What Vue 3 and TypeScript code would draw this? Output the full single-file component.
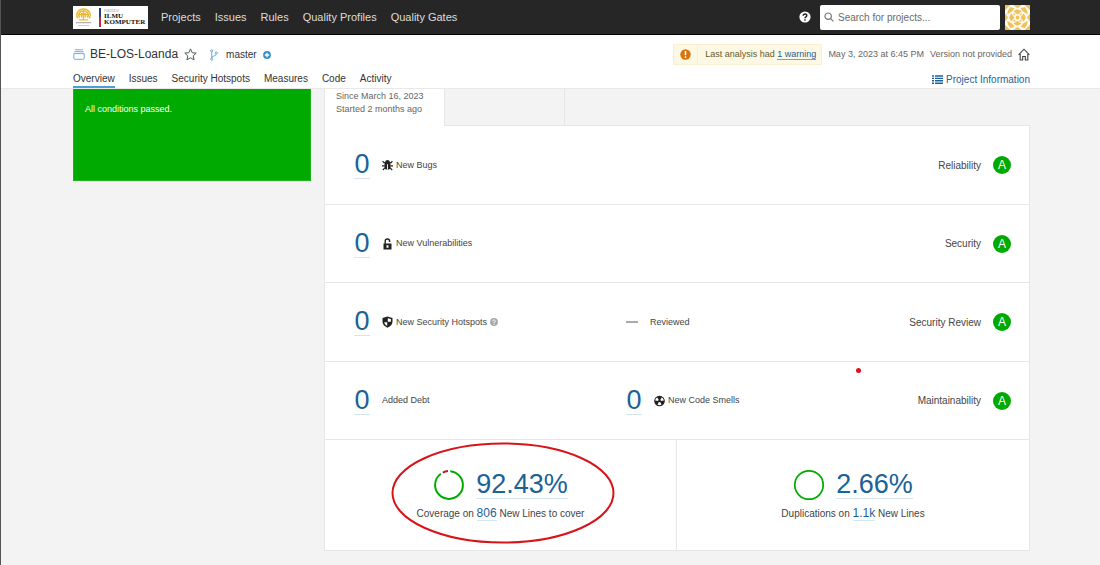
<script setup lang="ts">
interface Metric {
  value: string
  label: string
  icon?: 'bug' | 'lock' | 'shield' | 'smell'
  help?: boolean
}

interface MeasureRow {
  first: Metric
  second?: Metric
  domain: string
  rating: string
}

const navItems: string[] = ['Projects', 'Issues', 'Rules', 'Quality Profiles', 'Quality Gates']
const projectTabs: string[] = ['Overview', 'Issues', 'Security Hotspots', 'Measures', 'Code', 'Activity']

const rows: MeasureRow[] = [
  { first: { value: '0', label: 'New Bugs', icon: 'bug' }, domain: 'Reliability', rating: 'A' },
  { first: { value: '0', label: 'New Vulnerabilities', icon: 'lock' }, domain: 'Security', rating: 'A' },
  {
    first: { value: '0', label: 'New Security Hotspots', icon: 'shield', help: true },
    second: { value: '', label: 'Reviewed' },
    domain: 'Security Review',
    rating: 'A',
  },
  {
    first: { value: '0', label: 'Added Debt' },
    second: { value: '0', label: 'New Code Smells', icon: 'smell' },
    domain: 'Maintainability',
    rating: 'A',
  },
]

const metrics = (row: MeasureRow): Metric[] => (row.second ? [row.first, row.second] : [row.first])
</script>

<template>
  <div class="page">
    <header class="topbar">
      <a class="logo" href="#" aria-label="Fakultas Ilmu Komputer">
        <svg class="crest" viewBox="0 0 20 20" aria-hidden="true">
          <g fill="none" stroke="#edb92e" stroke-width="1.5">
            <path d="M4 11C1 6 5 1 10 1s9 5 6 10" />
            <path d="M6 10C3 6 7 3 10 3s7 3 4 7M8 10V6h4v4M10 2v11M5 7h10M5 12.500h10" />
          </g>
          <path d="M2 15.500h16" stroke="#999" stroke-width="1" />
          <path d="M4 18.500h12" stroke="#c8c8c8" stroke-width="1" />
        </svg>
        <span class="logo-bar"></span>
        <span class="logo-text">
          <span class="logo-small">FAKULTAS</span>
          <span>ILMU</span>
          <span>KOMPUTER</span>
        </span>
      </a>
      <nav class="nav" aria-label="Main">
        <a v-for="item in navItems" :key="item" href="#">{{ item }}</a>
      </nav>
      <button class="icon-button help" type="button" aria-label="Help">
        <svg width="12" height="12" viewBox="0 0 12 12">
          <circle cx="6" cy="6" r="5.6" fill="#fff" />
          <path d="M4.2 4.7C4.2 2.4 7.9 2.4 7.8 4.6 7.8 5.8 6 5.8 6 7.2M6 8.2v1.5" fill="none" stroke="#262626" stroke-width="1.5" />
        </svg>
      </button>
      <label class="search">
        <svg width="10" height="10" viewBox="0 0 10 10" aria-hidden="true">
          <circle cx="4.2" cy="4.2" r="3.2" fill="none" stroke="#777" stroke-width="1.2" />
          <path d="M6.6 6.6 9.4 9.4" stroke="#777" stroke-width="1.3" />
        </svg>
        <input type="search" placeholder="Search for projects..." aria-label="Search for projects" />
      </label>
      <button class="icon-button" type="button" aria-label="Account">
        <svg width="25" height="25" viewBox="0 0 24 24">
          <rect width="24" height="24" fill="#fffaf0" />
          <g fill="#eec25a">
            <path d="M0 0h5L0 5zM24 0v5l-5-5zM0 24v-5l5 5zM24 24h-5l5-5z" />
            <path d="M8 0h8l-4 3zM8 24h8l-4-3zM0 8v8l3-4zM24 8v8l-3-4z" />
            <path d="M5 2l4 1-2 3-5 3 1-4zM19 2l-4 1 2 3 5 3-1-4zM5 22l4-1-2-3-5-3 1 4zM19 22l-4-1 2-3 5-3-1 4z" />
            <path d="M12 4l4 2-4 3-4-3zM12 20l4-2-4-3-4 3zM4 12l2-4 3 4-3 4zM20 12l-2-4-3 4 3 4z" />
            <path d="M8 8l2.500.5-2 2zM16 8l-2.500.5 2 2zM8 16l2.500-.5-2-2zM16 16l-2.500-.5 2-2z" />
            <circle cx="12" cy="12" r="1.800" />
          </g>
        </svg>
      </button>
    </header>

    <section class="project">
      <div class="project-line">
        <svg class="project-icon" width="12" height="11" viewBox="0 0 12 11" aria-hidden="true">
          <path d="M2.2.8h7.6M1.4 2.7h9.2M.8 4.6h10.4V9c0 .8-.5 1.3-1.3 1.3H2.1C1.300 10.300.8 9.800.8 9z" fill="none" stroke="#69addd" />
        </svg>
        <a class="project-name" href="#">BE-LOS-Loanda</a>
        <button class="icon-button star" type="button" aria-label="Add to favorites">
          <svg width="13" height="13" viewBox="0 0 13 13">
            <path d="M6.500.9 8.200 4.700l4 .4-3 2.800.9 4-3.600-2.100-3.600 2.100.9-4-3-2.800 4-.4z" fill="none" stroke="#555" stroke-linejoin="round" />
          </svg>
        </button>
        <svg class="branch-icon" width="8" height="12" viewBox="0 0 8 12" aria-hidden="true">
          <g fill="none" stroke="#69addd">
            <circle cx="1.700" cy="1.800" r="1.100" />
            <circle cx="1.700" cy="10.200" r="1.100" />
            <circle cx="6.300" cy="4" r="1.100" />
            <path d="M1.700 3v6M6.300 5.100C6.300 7.500 1.700 6.500 1.700 9" />
          </g>
        </svg>
        <span class="branch">master</span>
        <button class="icon-button" type="button" aria-label="Branch information">
          <svg width="8" height="8" viewBox="0 0 8 8">
            <circle cx="4" cy="4" r="3.900" fill="#358fcd" />
            <path d="M4 1.800v4.400M1.800 4h4.400" stroke="#fff" stroke-width="1.300" />
          </svg>
        </button>
        <div class="meta">
          <div class="alert" role="status">
            <span class="alert-icon">
              <svg width="11" height="11" viewBox="0 0 11 11" aria-hidden="true">
                <circle cx="5.500" cy="5.500" r="5.200" fill="#d9730d" />
                <path d="M5.500 2v4.200M5.500 7.300v1.600" stroke="#fff" stroke-width="1.500" />
              </svg>
            </span>
            <span class="alert-text">Last analysis had <a href="#">1 warning</a></span>
          </div>
          <span>May 3, 2023 at 6:45 PM</span>
          <span>Version not provided</span>
          <button class="icon-button" type="button" aria-label="Set as homepage">
            <svg width="12" height="13" viewBox="0 0 12 13">
              <path d="M.6 6.800 6 1.200l5.400 5.600M2.200 6v6h2.500V8.500h2.600V12h2.500V6" fill="none" stroke="#444" stroke-width="1.100" />
            </svg>
          </button>
        </div>
      </div>
      <nav class="tabs" aria-label="Project">
        <a v-for="(tab, i) in projectTabs" :key="tab" href="#" :class="{ active: i === 0 }">{{ tab }}</a>
        <a class="information" href="#">
          <svg width="11" height="9" viewBox="0 0 11 9" aria-hidden="true">
            <path d="M0 1h2M3 1h8M0 3.400h2M3 3.400h8M0 5.800h2M3 5.800h8M0 8.200h2M3 8.200h8" stroke="#1b6297" stroke-width="1.400" />
          </svg>
          Project Information
        </a>
      </nav>
    </section>

    <main class="content">
      <aside class="gate">All conditions passed.</aside>
      <div class="overview">
        <div class="periods">
          <button class="period selected" type="button">Since March 16, 2023<br />Started 2 months ago</button>
          <button class="period" type="button" aria-label="Overall Code"></button>
        </div>
        <div class="panel">
          <div v-for="row in rows" :key="row.domain" class="row">
            <div v-for="metric in metrics(row)" :key="metric.label" class="metric">
              <a v-if="metric.value" class="value" href="#">{{ metric.value }}</a>
              <span v-else class="dash"></span>
              <span class="label">
                <svg v-if="metric.icon === 'bug'" width="11" height="12" viewBox="0 0 11 12" aria-hidden="true">
                  <path d="M3.200 3.200C3.200.4 7.800.4 7.800 3.200z" fill="#222" />
                  <path d="M1.800 3.500h7.400M.6 2.200 2.300 4M10.400 2.200 8.700 4M0 6.800h2.700M11 6.800H8.300M.8 11.200l2-2.400M10.200 11.200l-2-2.400" stroke="#222" stroke-width="1.200" />
                  <path d="M2.500 4h6v4.500c0 3-6 3-6 0z" fill="#222" />
                  <path d="M5.500 5.200v5.500" stroke="#fff" stroke-width=".9" />
                </svg>
                <svg v-else-if="metric.icon === 'lock'" width="11" height="12" viewBox="0 0 11 12" aria-hidden="true">
                  <path d="M3.200 6V3.200C3.200.3 7.600.3 7.600 3.200V4" fill="none" stroke="#222" stroke-width="1.400" />
                  <path d="M1.500 5.500h8v6h-8zM4.500 7.300v2.400h2V7.300z" fill="#222" fill-rule="evenodd" />
                </svg>
                <svg v-else-if="metric.icon === 'shield'" width="11" height="12" viewBox="0 0 11 12" aria-hidden="true">
                  <path d="M5.500.5 10.500 2v3.800c0 2.600-2 4.500-5 5.900-3-1.400-5-3.300-5-5.900V2z" fill="#222" />
                  <path d="M5.800 2.200 8.900 3v2.800H5.800zM5.200 6.200v3.600C3.500 8.900 2.500 7.800 2.200 6.200z" fill="#fff" />
                </svg>
                <svg v-else-if="metric.icon === 'smell'" width="11" height="12" viewBox="0 0 11 12" aria-hidden="true">
                  <circle cx="5.500" cy="6" r="4.700" fill="#222" stroke="#222" stroke-width="1.200" />
                  <path d="M5 5.300 3.200 2.500C2 3.200 1.300 4.300 1.200 5.600L4.300 6zM6 5.300l1.800-2.800c1.200.7 1.900 1.800 2 3.100L6.700 6zM4.800 7 3.500 9.700c1.200.6 2.800.6 4 0L6.200 7z" fill="#fff" />
                  <circle cx="5.500" cy="6" r="1.300" fill="#222" />
                </svg>
                <span>{{ metric.label }}</span>
                <button v-if="metric.help" class="icon-button" type="button" aria-label="About security hotspots">
                  <svg width="8" height="8" viewBox="0 0 8 8">
                    <circle cx="4" cy="4" r="3.900" fill="#a8a8a8" />
                    <path d="M2.700 3.300C2.700 1.500 5.300 1.500 5.300 3.200 5.300 4 4 4 4 5M4 5.600v1" fill="none" stroke="#fff" />
                  </svg>
                </button>
              </span>
            </div>
            <div class="domain">
              {{ row.domain }}
              <a class="rating" href="#">{{ row.rating }}</a>
            </div>
            <span v-if="row.domain === 'Maintainability'" class="pointer"></span>
          </div>
          <div class="totals">
            <div class="total">
              <div class="figure">
                <svg width="32" height="32" viewBox="0 0 32 32" aria-hidden="true">
                  <circle cx="16" cy="16" r="13.900" fill="none" stroke="#0a0" stroke-width="2" pathLength="100" stroke-dasharray="88.500 11.500" stroke-dashoffset="-1.500" transform="rotate(-90 16 16)" />
                  <path d="M9.800 3.600A13.900 13.900 0 0 1 15 2.100" fill="none" stroke="#b4202a" stroke-width="2" />
                </svg>
                <a class="value" href="#">92.43%</a>
              </div>
              <p>Coverage on <a href="#">806</a> New Lines to cover</p>
              <svg class="ellipse" viewBox="0 0 224 102" aria-hidden="true">
                <ellipse cx="112" cy="51" rx="110.500" ry="49.500" fill="none" stroke="#d8141a" stroke-width="2" />
              </svg>
            </div>
            <div class="total">
              <div class="figure">
                <svg width="32" height="32" viewBox="0 0 32 32" aria-hidden="true">
                  <circle cx="16" cy="16" r="14.200" fill="none" stroke="#0a0" stroke-width="1.700" />
                </svg>
                <a class="value" href="#">2.66%</a>
              </div>
              <p>Duplications on <a href="#">1.1k</a> New Lines</p>
            </div>
          </div>
        </div>
      </div>
    </main>
  </div>
</template>

<style>
body {
  margin: 0;
  background: #f3f3f3;
}
</style>

<style scoped>
.page {
  min-height: 100vh;
  box-sizing: border-box;
  border-left: 1px solid #555;
  background: #f3f3f3;
  color: #444;
  font: 10px/13px "Liberation Sans", Arial, sans-serif;
}

a {
  color: inherit;
  text-decoration: none;
}

svg {
  display: block;
  flex: none;
}

.icon-button {
  display: block;
  flex: none;
  padding: 0;
  border: 0;
  background: none;
  cursor: pointer;
}

.topbar {
  display: flex;
  align-items: center;
  box-sizing: border-box;
  height: 35px;
  padding: 0 70px 0 72px;
  border-bottom: 1px solid #000;
  background: #262626;
}

.logo {
  display: flex;
  align-items: center;
  box-sizing: border-box;
  width: 75px;
  height: 23px;
  padding-left: 1px;
  background: #fff;
}

.crest {
  width: 19px;
  height: 21px;
}

.logo-bar {
  width: 2px;
  height: 19px;
  margin: 0 3px 0 6px;
  background: linear-gradient(#263a86 50%, #c2283a 50%);
}

.logo-text {
  display: flex;
  flex-direction: column;
  color: #111;
  font: bold 7px/6px "Liberation Serif", "Times New Roman", serif;
}

.logo-text .logo-small {
  color: #888;
  font-size: 3px;
  font-weight: normal;
  line-height: 4px;
}

.nav {
  display: flex;
  gap: 14px;
  margin-left: 13px;
  color: #ddd;
  font-size: 11px;
}

.help {
  margin-left: auto;
}

.search {
  display: flex;
  align-items: center;
  box-sizing: border-box;
  width: 180px;
  height: 25px;
  margin: 0 5px 0 9px;
  padding: 0 4px;
  gap: 4px;
  border-radius: 2px;
  background: #fff;
}

.search input {
  flex: 1;
  min-width: 0;
  padding: 0;
  border: 0;
  outline: 0;
  background: none;
  color: #444;
  font: inherit;
}

.search input::placeholder {
  color: #6b6b6b;
  opacity: 1;
}

.project {
  box-sizing: border-box;
  padding: 9px 70px 0 72px;
  border-bottom: 1px solid #e8e8e8;
  background: #fff;
}

.project-line {
  display: flex;
  align-items: center;
  height: 21px;
}

.project-name {
  margin-left: 5px;
  color: #333;
  font-size: 12px;
}

.star {
  margin-left: 6px;
}

.branch-icon {
  margin-left: 13px;
}

.branch {
  margin: 0 6px 0 8px;
  color: #333;
}

.meta {
  display: flex;
  align-items: center;
  gap: 6px;
  margin-left: auto;
  color: #666;
  font-size: 9px;
}

.alert {
  display: flex;
  align-items: center;
  box-sizing: border-box;
  height: 21px;
  border: 1px solid #faf0cd;
  background: #fcf8e3;
  color: #6b5a2e;
}

.alert-icon {
  display: flex;
  align-items: center;
  height: 19px;
  padding: 0 6px;
  border-right: 1px solid #faf0cd;
}

.alert-text {
  padding: 0 5px 0 7px;
}

.alert a {
  border-bottom: 1px solid #6fa5c4;
  color: #1b6297;
}

.tabs {
  display: flex;
  gap: 14px;
  margin-top: 7px;
  color: #333;
}

.tabs a {
  height: 14px;
  border-bottom: 2px solid transparent;
}

.tabs .active {
  border-color: #4b9fd5;
}

.tabs .information {
  display: flex;
  align-items: center;
  gap: 3px;
  margin-left: auto;
  color: #1b6297;
}

.content {
  display: flex;
  align-items: flex-start;
  gap: 13px;
  padding: 0 70px 14px 72px;
}

.gate {
  box-sizing: border-box;
  flex: none;
  width: 238px;
  min-height: 92px;
  padding: 14px 11px;
  border: 1px solid #1fb31f;
  border-top: 0;
  background: #0a0;
  color: #fff;
  font-size: 9px;
}

.overview {
  flex: 1;
  min-width: 0;
}

.periods {
  display: flex;
}

.period {
  box-sizing: border-box;
  width: 120px;
  height: 36px;
  padding: 0 11px 9px;
  border: 0;
  border-right: 1px solid #e6e6e6;
  background: #f3f3f3;
  color: #666;
  font: 9px/13px "Liberation Sans", Arial, sans-serif;
  text-align: left;
  white-space: nowrap;
}

.selected {
  position: relative;
  width: 121px;
  height: 37px;
  margin-bottom: -1px;
  border-left: 1px solid #e6e6e6;
  background: #fff;
}

.panel {
  border: 1px solid #e6e6e6;
  background: #fff;
}

.row {
  position: relative;
  display: grid;
  grid-template-columns: 272px 1fr auto;
  align-items: center;
  box-sizing: border-box;
  height: 78px;
  padding: 0 18px 0 29px;
  border-bottom: 1px solid #e6e6e6;
}

.row:nth-child(odd) {
  height: 79px;
}

.metric {
  display: flex;
  align-items: center;
  gap: 12px;
  font-size: 9px;
}

.value {
  min-width: 16px;
  border-bottom: 1px solid #d3e6f0;
  color: #1b6297;
  font-size: 27px;
  line-height: 27px;
  text-align: center;
}

.dash {
  width: 12px;
  height: 2px;
  background: #aaa;
}

.label {
  display: flex;
  align-items: center;
  gap: 3px;
}

.domain {
  display: flex;
  grid-column: 3;
  align-items: center;
  gap: 12px;
}

.rating {
  width: 18px;
  height: 18px;
  border-radius: 50%;
  background: #0a0;
  color: #fff;
  font-size: 12px;
  line-height: 18px;
  text-align: center;
}

.pointer {
  position: absolute;
  top: 6px;
  right: 168px;
  width: 5px;
  height: 5px;
  border-radius: 50%;
  background: #e01218;
}

.totals {
  display: grid;
  grid-template-columns: 1fr 1fr;
}

.total {
  position: relative;
  display: flex;
  flex-direction: column;
  align-items: center;
  box-sizing: border-box;
  height: 110px;
  padding-top: 29px;
}

.total:first-child {
  border-right: 1px solid #e6e6e6;
}

.figure {
  display: flex;
  align-items: center;
  gap: 11px;
}

.total p {
  margin: 5px 0 0;
  line-height: 15px;
}

.total p a {
  border-bottom: 1px solid #d3e6f0;
  color: #1b6297;
  font-size: 12px;
}

.ellipse {
  position: absolute;
  top: 2px;
  left: 66px;
  width: 224px;
  height: 102px;
  pointer-events: none;
}
</style>
